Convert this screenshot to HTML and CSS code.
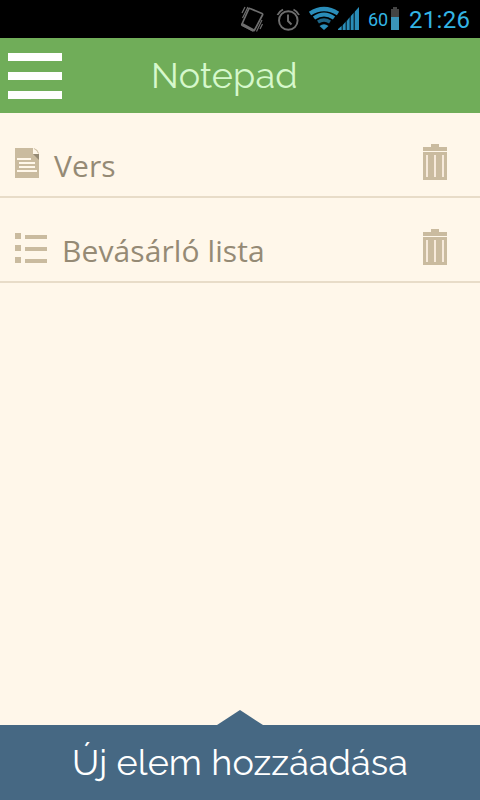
FILE: index.html
```html
<!DOCTYPE html>
<html lang="hu">
<head>
  <meta charset="UTF-8">
  <meta name="viewport" content="width=device-width, initial-scale=1.0">
  <title>Notepad</title>
  <link rel="stylesheet" href="styles.css">
</head>
<body>
  <div class="status-bar">
    <svg class="status-icons" width="130" height="38" viewBox="0 0 130 38">
      <!-- vibrate -->
      <g fill="none" stroke="#6e6e6e">
        <path d="M20 8.500L32 13.500Q33 14 32.500 15L24.500 30Q24 31 23 30.500L12.500 25.500Q11.500 25 12 24L18.500 9.500Q19 8 20 8.500Z" stroke-width="1.700"/>
        <path d="M12.500 24.500L23.500 30.500" stroke-width="3"/>
        <path d="M15 7L12 13M18 7L12.500 18M26.500 31.500L32 20M30 29L32.500 24" stroke-width="1.200"/>
      </g>
      <!-- alarm -->
      <g fill="none" stroke="#6e6e6e" stroke-width="1.900">
        <circle cx="58.300" cy="20.500" r="9.300"/>
        <path d="M58 14.500V21L61.500 24.500M47.500 15Q49 11.500 53 9.500M63.500 9.500Q67.500 11.500 69 15"/>
      </g>
      <!-- wifi -->
      <g fill="none" stroke="#2a8db9">
        <path d="M80 13.500Q94 4.500 108 13.500" stroke-width="4.200"/>
        <path d="M84 18Q94 11 104 18" stroke-width="3.800"/>
        <path d="M88 22Q94 18 100 22" stroke-width="3.400" stroke="#1d6485"/>
      </g>
      <path d="M89.500 26Q94 22.500 98.500 26L94 30Z" fill="#2a8db9"/>
      <!-- signal -->
      <path d="M108 30L129 7V30Z" fill="#0d3446"/>
      <path d="M108 30V29L111.500 26V30ZM113 30V25L115.500 22V30ZM117 30V21L119.500 17.500V30ZM121 30V16L123.500 13V30ZM125 30V11.500L129 7V30Z" fill="#2a8db9"/>
    </svg>
    <span class="battery-level">60</span>
    <svg class="battery" width="8" height="23" viewBox="0 0 8 23">
      <path d="M0 2H2V0H6V2H8V10H0Z" fill="#444"/>
      <path d="M0 10H8V23H0Z" fill="#3a94ba"/>
    </svg>
    <span class="clock">21:26</span>
  </div>

  <header class="header">
    <button class="menu-button" aria-label="Menü">
      <span></span>
      <span></span>
      <span></span>
    </button>
    <h1>Notepad</h1>
  </header>

  <ul class="notes">
    <li class="note">
      <svg class="note-icon" width="24" height="30" viewBox="0 0 24 30">
        <path d="M0 0H18L24 6V30H0Z" fill="#cabb9f"/>
        <path d="M18 6H24V12Z" fill="#958a75"/>
        <path d="M18 0V6H24Q23 1 18 0Z" fill="#fff7ea"/>
        <path d="M19 .5Q23 1.500 23.500 5.500Q22.500 2.500 19 .5Z" fill="#cabb9f" stroke="#cabb9f" stroke-width=".5"/>
        <path d="M2 11H16M4 15H20M4 19H20M2 23H22" stroke="#fff7ea" stroke-width="2"/>
      </svg>
      <span class="note-title">Vers</span>
      <button class="delete" aria-label="Törlés">
        <svg width="24" height="36" viewBox="0 0 24 36">
          <path d="M8 0H16V3H24V7H0V3H8ZM0 8H24V36H0Z" fill="#cabb9f"/>
          <path d="M3 11H5V33H3ZM11 11H13V33H11ZM19 11H21V33H19Z" fill="#f7eadb"/>
        </svg>
      </button>
    </li>
    <li class="note">
      <svg class="note-icon" width="32" height="30" viewBox="0 0 32 30">
        <path d="M0 0H6V6H0ZM0 12H6V18H0ZM0 24H6V30H0ZM10 2H32V6H10ZM10 14H32V18H10ZM10 26H32V30H10Z" fill="#cabb9f"/>
      </svg>
      <span class="note-title">Bevásárló lista</span>
      <button class="delete" aria-label="Törlés">
        <svg width="24" height="36" viewBox="0 0 24 36">
          <path d="M8 0H16V3H24V7H0V3H8ZM0 8H24V36H0Z" fill="#cabb9f"/>
          <path d="M3 11H5V33H3ZM11 11H13V33H11ZM19 11H21V33H19Z" fill="#f7eadb"/>
        </svg>
      </button>
    </li>
  </ul>

  <div class="arrow"></div>
  <button class="add-button">Új elem hozzáadása</button>
</body>
</html>
```
FILE: styles.css
```css
* {
  box-sizing: border-box;
}

body {
  margin: 0;
  height: 100vh;
  display: flex;
  flex-direction: column;
  background: #fff7ea;
  font-family: "Open Sans", "Noto Sans", sans-serif;
}

button {
  border: none;
  background: none;
  padding: 0;
  cursor: pointer;
}

svg {
  display: block;
  flex: none;
}

.status-bar {
  height: 38px;
  display: flex;
  justify-content: flex-end;
  align-items: center;
  padding-right: 9px;
  background: #000;
  color: #33b5e5;
  font-family: Roboto, sans-serif;
}

.battery-level {
  width: 20px;
  margin-left: 8px;
  padding-top: 2px;
  font-size: 18px;
  line-height: 36px;
}

.battery {
  margin: 0 0 2px 3px;
}

.clock {
  width: 62px;
  margin-left: 10px;
  padding-top: 2px;
  font-size: 24px;
  line-height: 36px;
  letter-spacing: 0.3px;
  white-space: nowrap;
}

.header {
  height: 75px;
  display: flex;
  align-items: center;
  padding-left: 8px;
  background: #70ad59;
}

.menu-button {
  width: 54px;
  height: 46px;
  display: flex;
  flex-direction: column;
  justify-content: space-between;
}

.menu-button span {
  width: 54px;
  height: 8px;
  background: #fff;
}

.header h1 {
  margin: 0 0 0 89px;
  color: #d6f8cc;
  font-family: Raleway, Lato, sans-serif;
  font-size: 36px;
  font-weight: 400;
  line-height: 75px;
  letter-spacing: 0.15px;
}

.notes {
  flex: 1;
  margin: 0;
  padding: 0;
  list-style: none;
}

.note {
  height: 85px;
  display: flex;
  align-items: flex-start;
  padding: 31px 33px 0 15px;
  border-bottom: 2px solid #e8dcc8;
}

.note-icon {
  margin-top: 4px;
}

.note-title {
  flex: 1;
  margin-left: 15px;
  color: #958a75;
  font-size: 30px;
  line-height: 44px;
  letter-spacing: 0.1px;
}

.arrow {
  align-self: center;
  border: solid transparent;
  border-width: 0 23px 15px;
  border-bottom-color: #466883;
}

.add-button {
  height: 75px;
  background: #466883;
  color: #fff;
  font-family: Raleway, Lato, sans-serif;
  font-size: 36px;
  line-height: 75px;
  letter-spacing: 0.1px;
}
```
